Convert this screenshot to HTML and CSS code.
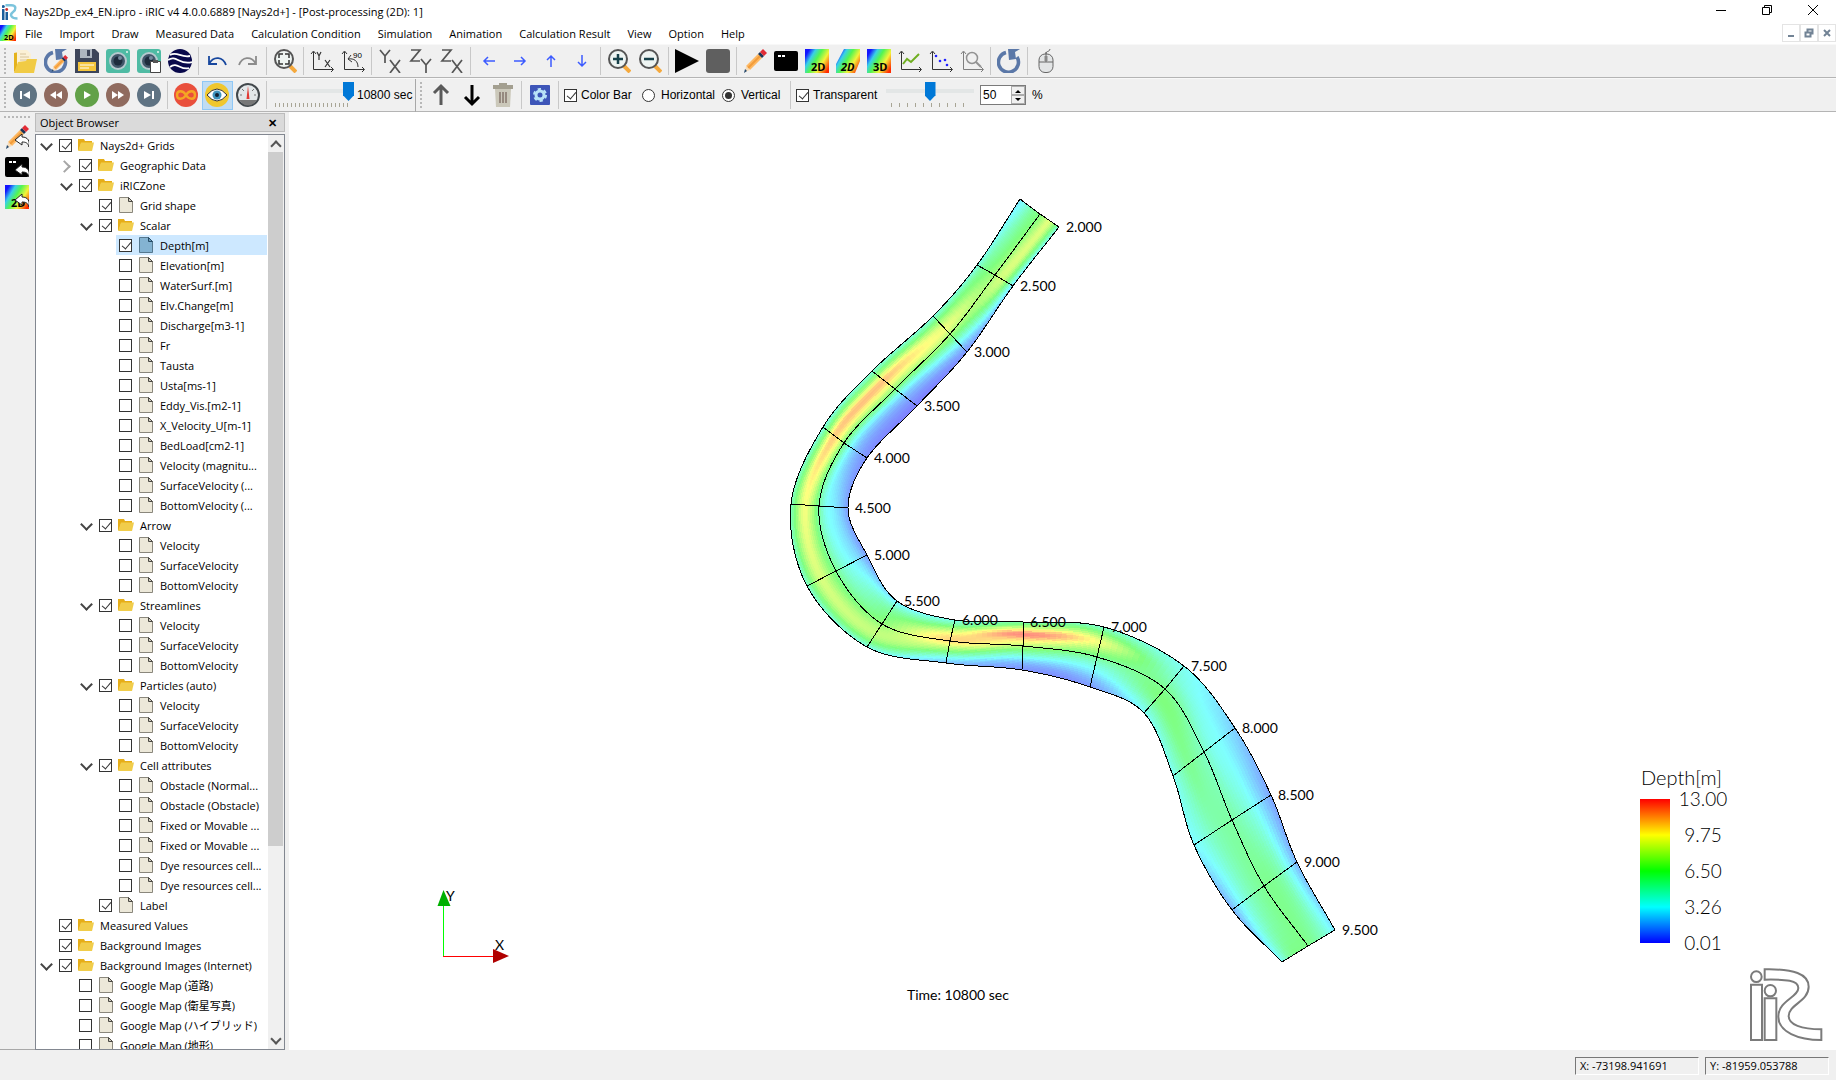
FILE: index.html
```
<!DOCTYPE html>
<html lang="en">
    <head>
        <meta charset="UTF-8">
        <title>Nays2Dp_ex4_EN.ipro - iRIC v4 4.0.0.6889 [Nays2d+] - [Post-processing (2D): 1]</title>
        <link rel="stylesheet" href="styles.css">
    </head>
    <body>
        <!-- icon definitions -->
        <svg class="defs" aria-hidden="true">
            <defs>
                <linearGradient id="rainbow" x1="0" y1="0.2" x2="1" y2="0.8">
                    <stop offset="0.05" stop-color="#1414ff"/>
                    <stop offset="0.25" stop-color="#39d0e8"/>
                    <stop offset="0.45" stop-color="#52f552"/>
                    <stop offset="0.7" stop-color="#f4f43a"/>
                    <stop offset="1" stop-color="#ff2a00"/>
                </linearGradient>
                <linearGradient id="depthBar" x1="0" y1="0" x2="0" y2="1">
                    <stop offset="0" stop-color="#f00"/>
                    <stop offset="0.25" stop-color="#ff0"/>
                    <stop offset="0.5" stop-color="#0f0"/>
                    <stop offset="0.75" stop-color="#0ff"/>
                    <stop offset="1" stop-color="#00f"/>
                </linearGradient>
            </defs>
            <symbol id="folder" viewBox="0 0 16 16">
                <path d="M0 2h6l1 2h7v3H3L1 13H0z" fill="#e6ae18"/>
                <path d="M3 5.500h13L14 14H0z" fill="#f1cd4b"/>
            </symbol>
            <symbol id="file" viewBox="0 0 16 16">
                <path d="M1.500 .500h9l4 4v11h-13z" fill="#ece8d9" stroke="#8a877c"/>
                <path d="M10.500 .500v4h4z" fill="#cfccbf" stroke="#4c4a44"/>
            </symbol>
            <symbol id="file-on" viewBox="0 0 16 16">
                <path d="M1.500 .500h9l4 4v11h-13z" fill="#84b3d2" stroke="#55788f"/>
                <path d="M10.500 .500v4h4z" fill="#6b9dbd" stroke="#274c66"/>
            </symbol>
            <symbol id="iric" viewBox="0 0 16 16">
                <path d="M0 5h2.500v11H0zM3.500 8H6v8H3.500z" fill="#1c5e9c"/>
                <circle cx="1.300" cy="2.500" r="1.500" fill="#1c5e9c"/><circle cx="4.700" cy="5.500" r="1.400" fill="#d03030"/>
                <path d="M3.500 1.300H9c6 0 5 4.500 2 6.700-4 3-1.500 6.500 4.500 6.500" fill="none" stroke="#7cc4dc" stroke-width="2.400"/>
            </symbol>
            <symbol id="open" viewBox="0 0 24 24">
                <path d="M1 4l5-1 1 15-6 5z" fill="#e5b31c"/>
                <path d="M4 1h10l4 4v14H4z" fill="#fbf0d5"/>
                <path d="M7 5h6M7 8h9M7 11h9" stroke="#d8c49c"/>
                <path d="M5 13l8-1 1-2h10l-3 14H1z" fill="#f1cb45"/>
            </symbol>
            <symbol id="pen" viewBox="0 0 24 24">
                <path d="M3 17L15 5l4 4L7 21z" fill="#fdb863"/><path d="M5 19L17 7" stroke="#f29c3a" stroke-width="2"/>
                <path d="M3 17l4 4-5 2z" fill="#f7dcb8"/><path d="M1 24l1-4 2 2z" fill="#24476b"/>
                <path d="M15 5l2-2 4 4-2 2z" fill="#1d3557"/><path d="M17 3l3-3 4 4-3 3z" fill="#e22b35"/>
            </symbol>
            <symbol id="reload" viewBox="0 0 24 24">
                <path d="M9 3.500A10 10 0 1 0 20 8" fill="none" stroke="#5b78a8" stroke-width="3.600"/>
                <path d="M11 0h12l-5 3 1 7-7 1z" fill="#5b78a8"/>
            </symbol>
            <symbol id="reloadpen" viewBox="0 0 24 24">
                <use href="#reload"/><use href="#pen" x="7" y="6" width="17" height="17"/>
            </symbol>
            <symbol id="save" viewBox="0 0 24 24">
                <path d="M0 0h20l4 4v20H0z" fill="#3d4559"/><path d="M5 0h12v9H5z" fill="#aeb6c0"/>
                <path d="M12 1h3v6h-3z" fill="#3d4559"/><path d="M3 13h18v9H3z" fill="#f5c63c"/>
                <path d="M5 16h14M5 19h9" stroke="#fff" stroke-width="1"/>
            </symbol>
            <symbol id="camera" viewBox="0 0 24 24">
                <rect width="24" height="24" rx="3" fill="#4fbba4"/><circle cx="12" cy="12" r="9" fill="#b6c9cf"/>
                <circle cx="12" cy="12" r="7" fill="#42566a"/><circle cx="12" cy="12" r="4.500" fill="#1d2b3d"/>
                <circle cx="14" cy="9" r="2" fill="#73879b"/><circle cx="21" cy="3" r="1" fill="#e9f5f2"/>
            </symbol>
            <symbol id="camcopy" viewBox="0 0 24 24">
                <use href="#camera"/><path d="M13.500 12.500h10v11h-10z" fill="#fff" stroke="#444"/><path d="M16 11h5v3h-5z" fill="#555"/>
            </symbol>
            <symbol id="earth" viewBox="0 0 24 24">
                <circle cx="12" cy="12" r="12" fill="#08084b"/>
                <path d="M2 6c7-4 11 3 20 1M0 11c8-6 12 6 24 2M2 18c7-6 11 4 19 1" fill="none" stroke="#fff" stroke-width="1.800"/>
            </symbol>
            <symbol id="undo" viewBox="0 0 24 24">
                <path d="M4 7v8h8M4 15C9 6 18 8 21 16" fill="none" stroke="#17479e" stroke-width="1.800"/>
            </symbol>
            <symbol id="redo" viewBox="0 0 24 24">
                <path d="M20 7v8h-8M20 15C15 6 6 8 3 16" fill="none" stroke="#8c8c8c" stroke-width="1.800"/>
            </symbol>
            <symbol id="glass" viewBox="0 0 24 24">
                <path d="M17 17l6 6" stroke="#f5a93d" stroke-width="4"/><circle cx="11" cy="10" r="9" fill="#eef4f2" stroke="#555" stroke-width="2"/>
            </symbol>
            <symbol id="fit" viewBox="0 0 24 24">
                <use href="#glass"/><path d="M6 9V5h4M12 5h4v4M16 11v4h-4M10 15H6v-4" fill="none" stroke="#333" stroke-width="1.500"/>
            </symbol>
            <symbol id="zoomin" viewBox="0 0 24 24">
                <use href="#glass"/><path d="M6 10h10M11 5v10" stroke="#17414a" stroke-width="2.500"/>
            </symbol>
            <symbol id="zoomout" viewBox="0 0 24 24">
                <use href="#glass"/><path d="M6 10h10" stroke="#17414a" stroke-width="2.500"/>
            </symbol>
            <symbol id="axis" viewBox="0 0 24 24">
                <path d="M3.500 3v17.500H23M1 5l2.500-3L6 5M21 18l2.500 2.500L21 23" fill="none" stroke="#333"/>
            </symbol>
            <symbol id="axisyx" viewBox="0 0 24 24">
                <use href="#axis"/><path d="M7 3l2 4 2-4M9 7v4M15 11l5 7M20 11l-5 7" fill="none" stroke="#333" stroke-width="1.200"/>
            </symbol>
            <symbol id="axis90" viewBox="0 0 24 24">
                <use href="#axis"/><path d="M17 18c0-6-4-9-10-8M10 6L7 10l4 3" fill="none" stroke="#333"/>
                <text x="12" y="9" font-size="8" font-family="Liberation Sans">90</text>
            </symbol>
            <symbol id="vyx" viewBox="0 0 24 24"><path d="M2 1l5 6 5-6M7 7v7M12 11l10 13M22 11L12 24" fill="none" stroke="#555" stroke-width="1.700"/></symbol>
            <symbol id="vzy" viewBox="0 0 24 24"><path d="M2 1h9L2 12h9M12 10l5 6 5-6M17 16v8" fill="none" stroke="#555" stroke-width="1.700"/></symbol>
            <symbol id="vzx" viewBox="0 0 24 24"><path d="M2 1h9L2 12h9M12 11l10 13M22 11L12 24" fill="none" stroke="#555" stroke-width="1.700"/></symbol>
            <symbol id="arrow" viewBox="0 0 24 24"><path d="M7 12h11M11 8l-4 4 4 4" fill="none" stroke="#3c5bff" stroke-width="1.500"/></symbol>
            <symbol id="play" viewBox="0 0 24 24"><path d="M0 0l24 12L0 24z"/></symbol>
            <symbol id="stop" viewBox="0 0 24 24"><rect width="24" height="24" rx="3" fill="#5f5f5f"/></symbol>
            <symbol id="console" viewBox="0 0 24 24"><rect y="2" width="24" height="20" rx="2"/><path d="M4 7h3M8 7h3" stroke="#fff" stroke-width="2"/></symbol>
            <symbol id="post2d" viewBox="0 0 24 24">
                <path d="M0 0h24v24H0z" fill="url(#rainbow)"/><text x="6" y="22" class="icontext">2D</text>
            </symbol>
            <symbol id="post2dbird" viewBox="0 0 24 24">
                <path d="M8 0h16v12l-5 12H0v-9z" fill="url(#rainbow)"/><text x="5" y="22" class="icontext slant">2D</text>
            </symbol>
            <symbol id="post3d" viewBox="0 0 24 24">
                <path d="M0 0h24v24H0z" fill="url(#rainbow)"/><text x="6" y="22" class="icontext">3D</text>
            </symbol>
            <symbol id="chart" viewBox="0 0 24 24"><use href="#axis"/><path d="M5 15l4-5 4 3 8-8" fill="none" stroke="#6fae20" stroke-width="2"/></symbol>
            <symbol id="scatter" viewBox="0 0 24 24"><use href="#axis"/><g fill="#22f"><circle cx="7" cy="7" r="1.300"/><circle cx="11" cy="12" r="1.300"/><circle cx="16" cy="11" r="1.300"/><circle cx="18" cy="16" r="1.300"/></g></symbol>
            <symbol id="chartzoom" viewBox="0 0 24 24"><g opacity="0.6"><use href="#axis"/><circle cx="12" cy="9" r="5.500" fill="none" stroke="#555" stroke-width="1.500"/><path d="M16 13l5 5" stroke="#555" stroke-width="2"/></g></symbol>
            <symbol id="mouse" viewBox="0 0 24 24">
                <rect x="5" y="5" width="14" height="18.500" rx="6" fill="#e3e5e6" stroke="#666"/><path d="M5 13h14M12 3v10M12 5c0-4 3-1 4-5" fill="none" stroke="#666"/><path d="M10.500 7h3v5h-3z" fill="#888"/>
            </symbol>
            <symbol id="first" viewBox="0 0 24 24"><circle cx="12" cy="12" r="12" fill="#5f7383"/><path d="M7 8h2v8H7zM17 8v8l-7-4z" fill="#fff"/></symbol>
            <symbol id="back" viewBox="0 0 24 24"><circle cx="12" cy="12" r="12" fill="#906b5f"/><path d="M12 8v8l-6-4zM18 8v8l-6-4z" fill="#fff"/></symbol>
            <symbol id="run" viewBox="0 0 24 24"><circle cx="12" cy="12" r="12" fill="#62a148"/><path d="M9 8l7 4-7 4z" fill="#fff"/></symbol>
            <symbol id="loop" viewBox="0 0 24 24"><circle cx="12" cy="12" r="12" fill="#e94f3c"/><path d="M12 12C9 7 3 7 3 12s6 5 9 0 9-5 9 0-6 5-9 0z" fill="none" stroke="#f5a623" stroke-width="2.400"/></symbol>
            <symbol id="eye" viewBox="0 0 24 24"><circle cx="12" cy="12" r="12" fill="#f0c72e"/><path d="M2 12q10-12 20 0-10 12-20 0z" fill="#fff" stroke="#333"/><circle cx="12" cy="12" r="4.500" fill="#3f93bd"/><circle cx="12" cy="12" r="2" fill="#123"/></symbol>
            <symbol id="gauge" viewBox="0 0 24 24"><circle cx="12" cy="12" r="11" fill="#e3e8ea" stroke="#42484c" stroke-width="2"/><path d="M3 17h18q-9 11-18 0z" fill="#777"/><path d="M4 12h2M18 12h2M6 6l2 2M18 6l-2 2" stroke="#777"/><path d="M12 3l1.500 13h-3z" fill="#e23b35"/></symbol>
            <symbol id="up" viewBox="0 0 24 24"><path d="M12 22V4M5 10l7-7 7 7" fill="none" stroke="currentColor" stroke-width="3"/></symbol>
            <symbol id="trash" viewBox="0 0 24 24"><path d="M4 6h16l-1 18H5z" fill="#cbc8ba"/><path d="M2 2h20v4H2zM8 0h8v3H8z" fill="#a39f90"/><path d="M9 9v11M12 9v11M15 9v11" stroke="#96897f" stroke-width="2"/></symbol>
            <symbol id="gear" viewBox="0 0 24 24">
                <rect x="2" y="2" width="20" height="20" rx="1" fill="#3d55b8"/><circle cx="12" cy="12" r="4" fill="none" stroke="#b9e3f8" stroke-width="3"/>
                <circle cx="12" cy="12" r="6" fill="none" stroke="#b9e3f8" stroke-width="2" stroke-dasharray="3.300 3"/>
            </symbol>
            <symbol id="reply" viewBox="0 0 24 24"><path d="M10 15l7-6v3c6 0 8 4 7 10-1-4-3-5-7-5v3z" stroke="#222"/></symbol>
        </svg>

        <header class="titlebar">
            <svg class="ico16"><use href="#iric"/></svg>
            <span class="title">Nays2Dp_ex4_EN.ipro - iRIC v4 4.0.0.6889 [Nays2d+] - [Post-processing (2D): 1]</span>
            <div class="winbtns">
                <button aria-label="Minimize"><svg viewBox="0 0 10 10"><path d="M0 5.500h10"/></svg></button>
                <button aria-label="Restore"><svg viewBox="0 0 10 10"><path d="M.500 2.500h7v7h-7zM2.500 2.500v-2h7v7h-2"/></svg></button>
                <button aria-label="Close"><svg viewBox="0 0 10 10"><path d="M0 0l10 10M10 0L0 10"/></svg></button>
            </div>
        </header>

        <nav class="menubar">
            <svg class="ico16"><use href="#post2d"/></svg>
            <a href="#">File</a>
            <a href="#">Import</a>
            <a href="#">Draw</a>
            <a href="#">Measured Data</a>
            <a href="#">Calculation Condition</a>
            <a href="#">Simulation</a>
            <a href="#">Animation</a>
            <a href="#">Calculation Result</a>
            <a href="#">View</a>
            <a href="#">Option</a>
            <a href="#">Help</a>
            <div class="mdibtns">
                <button aria-label="Minimize window"><svg viewBox="0 0 10 10"><path d="M2 8h6"/></svg></button>
                <button aria-label="Restore window"><svg viewBox="0 0 10 10"><path d="M1.500 4.500h5v4h-5zM3.500 4V1.500h5v4H7"/></svg></button>
                <button aria-label="Close window"><svg viewBox="0 0 10 10"><path d="M2 2l6 6M8 2L2 8"/></svg></button>
            </div>
        </nav>

        <div class="toolbar">
            <span class="grip"></span>
            <button aria-label="Open"><svg><use href="#open"/></svg></button>
            <button aria-label="Reload project"><svg><use href="#reloadpen"/></svg></button>
            <button aria-label="Save"><svg><use href="#save"/></svg></button>
            <button aria-label="Snapshot"><svg><use href="#camera"/></svg></button>
            <button aria-label="Copy snapshot"><svg><use href="#camcopy"/></svg></button>
            <button aria-label="Google Earth"><svg><use href="#earth"/></svg></button>
            <span class="sep"></span>
            <button aria-label="Undo"><svg><use href="#undo"/></svg></button>
            <button aria-label="Redo"><svg><use href="#redo"/></svg></button>
            <span class="sep"></span>
            <button aria-label="Fit"><svg><use href="#fit"/></svg></button>
            <span class="sep"></span>
            <button aria-label="Reset rotation"><svg><use href="#axisyx"/></svg></button>
            <button aria-label="Rotate 90"><svg><use href="#axis90"/></svg></button>
            <span class="sep"></span>
            <button aria-label="XY plane"><svg><use href="#vyx"/></svg></button>
            <button aria-label="YZ plane"><svg><use href="#vzy"/></svg></button>
            <button aria-label="XZ plane"><svg><use href="#vzx"/></svg></button>
            <span class="sep"></span>
            <button aria-label="Move left"><svg><use href="#arrow"/></svg></button>
            <button aria-label="Move right"><svg class="r180"><use href="#arrow"/></svg></button>
            <button aria-label="Move up"><svg class="r90"><use href="#arrow"/></svg></button>
            <button aria-label="Move down"><svg class="r270"><use href="#arrow"/></svg></button>
            <span class="sep"></span>
            <button aria-label="Zoom in"><svg><use href="#zoomin"/></svg></button>
            <button aria-label="Zoom out"><svg><use href="#zoomout"/></svg></button>
            <span class="sep"></span>
            <button aria-label="Run"><svg><use href="#play"/></svg></button>
            <button aria-label="Stop"><svg><use href="#stop"/></svg></button>
            <span class="sep"></span>
            <button aria-label="Pre-processor"><svg><use href="#pen"/></svg></button>
            <button aria-label="Solver console"><svg><use href="#console"/></svg></button>
            <button aria-label="2D post"><svg><use href="#post2d"/></svg></button>
            <button aria-label="2D bird eye post"><svg><use href="#post2dbird"/></svg></button>
            <button aria-label="3D post"><svg><use href="#post3d"/></svg></button>
            <button aria-label="Chart"><svg><use href="#chart"/></svg></button>
            <button aria-label="Scatter chart"><svg><use href="#scatter"/></svg></button>
            <button aria-label="Verification"><svg><use href="#chartzoom"/></svg></button>
            <span class="sep"></span>
            <button aria-label="Reload result"><svg><use href="#reload"/></svg></button>
            <span class="sep"></span>
            <button aria-label="Mouse hint"><svg><use href="#mouse"/></svg></button>
        </div>

        <div class="toolbar">
            <span class="grip"></span>
            <button aria-label="First"><svg><use href="#first"/></svg></button>
            <button aria-label="Back"><svg><use href="#back"/></svg></button>
            <button aria-label="Play"><svg><use href="#run"/></svg></button>
            <button aria-label="Forward"><svg class="r180"><use href="#back"/></svg></button>
            <button aria-label="Last"><svg class="r180"><use href="#first"/></svg></button>
            <span class="sep"></span>
            <button aria-label="Loop"><svg><use href="#loop"/></svg></button>
            <button class="active" aria-label="Follow"><svg><use href="#eye"/></svg></button>
            <button aria-label="Speed"><svg><use href="#gauge"/></svg></button>
            <span class="sep"></span>
            <span class="slider time"><input type="range" aria-label="Time step" min="0" max="20" value="20"></span>
            <span class="tbtext seconds">10800 sec</span>
            <span class="grip"></span>
            <button class="gray" aria-label="Move up"><svg><use href="#up"/></svg></button>
            <button aria-label="Move down"><svg class="r180"><use href="#up"/></svg></button>
            <button aria-label="Delete"><svg><use href="#trash"/></svg></button>
            <span class="sep"></span>
            <button aria-label="Property"><svg><use href="#gear"/></svg></button>
            <span class="sep"></span>
            <label class="tbtext w80"><input type="checkbox" checked>Color Bar</label>
            <label class="tbtext w80"><input type="radio" name="dir">Horizontal</label>
            <label class="tbtext w66"><input type="radio" name="dir" checked>Vertical</label>
            <span class="sep"></span>
            <label class="tbtext w92"><input type="checkbox" checked>Transparent</label>
            <span class="slider alpha"><input type="range" aria-label="Opacity" min="0" max="100" value="50"></span>
            <span class="spin">
                <input type="text" aria-label="Opacity value" value="50">
                <span class="steps">
                    <button aria-label="Increase"><svg viewBox="0 0 8 4"><path d="M1 4l3-3 3 3z"/></svg></button>
                    <button aria-label="Decrease"><svg viewBox="0 0 8 4"><path d="M1 0l3 3 3-3z"/></svg></button>
                </span>
            </span>
            <span class="tbtext">%</span>
        </div>

        <main>
            <aside class="sidebar">
                <span class="hgrip"></span>
                <button aria-label="Focus pre-processor"><svg><use href="#pen"/><use href="#reply" class="light"/></svg></button>
                <button aria-label="Focus console"><svg><use href="#console"/><use href="#reply" class="light"/></svg></button>
                <button aria-label="Focus 2D post"><svg><use href="#post2d"/><use href="#reply" class="light"/></svg></button>
            </aside>

            <section class="browser">
                <h2>Object Browser <button aria-label="Close">✕</button></h2>
                <div class="treebox">
                    <ul class="tree">
                        <li class="open"><label><input type="checkbox" checked><svg><use href="#folder"/></svg>Nays2d+ Grids</label></li>
                        <li class="lv1 closed"><label><input type="checkbox" checked><svg><use href="#folder"/></svg>Geographic Data</label></li>
                        <li class="lv1 open"><label><input type="checkbox" checked><svg><use href="#folder"/></svg>iRICZone</label></li>
                        <li class="lv2"><label><input type="checkbox" checked><svg><use href="#file"/></svg>Grid shape</label></li>
                        <li class="lv2 open"><label><input type="checkbox" checked><svg><use href="#folder"/></svg>Scalar</label></li>
                        <li class="lv3 selected"><label><input type="checkbox" checked><svg><use href="#file-on"/></svg>Depth[m]</label></li>
                        <li class="lv3"><label><input type="checkbox"><svg><use href="#file"/></svg>Elevation[m]</label></li>
                        <li class="lv3"><label><input type="checkbox"><svg><use href="#file"/></svg>WaterSurf.[m]</label></li>
                        <li class="lv3"><label><input type="checkbox"><svg><use href="#file"/></svg>Elv.Change[m]</label></li>
                        <li class="lv3"><label><input type="checkbox"><svg><use href="#file"/></svg>Discharge[m3-1]</label></li>
                        <li class="lv3"><label><input type="checkbox"><svg><use href="#file"/></svg>Fr</label></li>
                        <li class="lv3"><label><input type="checkbox"><svg><use href="#file"/></svg>Tausta</label></li>
                        <li class="lv3"><label><input type="checkbox"><svg><use href="#file"/></svg>Usta[ms-1]</label></li>
                        <li class="lv3"><label><input type="checkbox"><svg><use href="#file"/></svg>Eddy_Vis.[m2-1]</label></li>
                        <li class="lv3"><label><input type="checkbox"><svg><use href="#file"/></svg>X_Velocity_U[m-1]</label></li>
                        <li class="lv3"><label><input type="checkbox"><svg><use href="#file"/></svg>BedLoad[cm2-1]</label></li>
                        <li class="lv3"><label><input type="checkbox"><svg><use href="#file"/></svg>Velocity (magnitu...</label></li>
                        <li class="lv3"><label><input type="checkbox"><svg><use href="#file"/></svg>SurfaceVelocity (...</label></li>
                        <li class="lv3"><label><input type="checkbox"><svg><use href="#file"/></svg>BottomVelocity (...</label></li>
                        <li class="lv2 open"><label><input type="checkbox" checked><svg><use href="#folder"/></svg>Arrow</label></li>
                        <li class="lv3"><label><input type="checkbox"><svg><use href="#file"/></svg>Velocity</label></li>
                        <li class="lv3"><label><input type="checkbox"><svg><use href="#file"/></svg>SurfaceVelocity</label></li>
                        <li class="lv3"><label><input type="checkbox"><svg><use href="#file"/></svg>BottomVelocity</label></li>
                        <li class="lv2 open"><label><input type="checkbox" checked><svg><use href="#folder"/></svg>Streamlines</label></li>
                        <li class="lv3"><label><input type="checkbox"><svg><use href="#file"/></svg>Velocity</label></li>
                        <li class="lv3"><label><input type="checkbox"><svg><use href="#file"/></svg>SurfaceVelocity</label></li>
                        <li class="lv3"><label><input type="checkbox"><svg><use href="#file"/></svg>BottomVelocity</label></li>
                        <li class="lv2 open"><label><input type="checkbox" checked><svg><use href="#folder"/></svg>Particles (auto)</label></li>
                        <li class="lv3"><label><input type="checkbox"><svg><use href="#file"/></svg>Velocity</label></li>
                        <li class="lv3"><label><input type="checkbox"><svg><use href="#file"/></svg>SurfaceVelocity</label></li>
                        <li class="lv3"><label><input type="checkbox"><svg><use href="#file"/></svg>BottomVelocity</label></li>
                        <li class="lv2 open"><label><input type="checkbox" checked><svg><use href="#folder"/></svg>Cell attributes</label></li>
                        <li class="lv3"><label><input type="checkbox"><svg><use href="#file"/></svg>Obstacle (Normal...</label></li>
                        <li class="lv3"><label><input type="checkbox"><svg><use href="#file"/></svg>Obstacle (Obstacle)</label></li>
                        <li class="lv3"><label><input type="checkbox"><svg><use href="#file"/></svg>Fixed or Movable ...</label></li>
                        <li class="lv3"><label><input type="checkbox"><svg><use href="#file"/></svg>Fixed or Movable ...</label></li>
                        <li class="lv3"><label><input type="checkbox"><svg><use href="#file"/></svg>Dye resources cell...</label></li>
                        <li class="lv3"><label><input type="checkbox"><svg><use href="#file"/></svg>Dye resources cell...</label></li>
                        <li class="lv2"><label><input type="checkbox" checked><svg><use href="#file"/></svg>Label</label></li>
                        <li><label><input type="checkbox" checked><svg><use href="#folder"/></svg>Measured Values</label></li>
                        <li><label><input type="checkbox" checked><svg><use href="#folder"/></svg>Background Images</label></li>
                        <li class="open"><label><input type="checkbox" checked><svg><use href="#folder"/></svg>Background Images (Internet)</label></li>
                        <li class="lv1"><label><input type="checkbox"><svg><use href="#file"/></svg>Google Map (道路)</label></li>
                        <li class="lv1"><label><input type="checkbox"><svg><use href="#file"/></svg>Google Map (衛星写真)</label></li>
                        <li class="lv1"><label><input type="checkbox"><svg><use href="#file"/></svg>Google Map (ハイブリッド)</label></li>
                        <li class="lv1"><label><input type="checkbox"><svg><use href="#file"/></svg>Google Map (地形)</label></li>
                    </ul>
                    <div class="scroll">
                        <button class="sup" aria-label="Scroll up"></button>
                        <div class="thumb"></div>
                        <div class="rest"></div>
                        <button class="sdown" aria-label="Scroll down"></button>
                    </div>
                </div>
            </section>

            <svg class="view" viewBox="289 112 1547 938" preserveAspectRatio="xMidYMid meet">
                <g id="mesh" shape-rendering="crispEdges"></g>
                <g id="lines" fill="none" stroke="#000" shape-rendering="crispEdges"></g>
                <g id="stations" class="vtk"></g>

                <!-- axes -->
                <path d="M443.500 957V906" stroke="#0f0"/>
                <path d="M443 956.500h50" stroke="#f00"/>
                <path d="M443.500 890l7 16h-13z" fill="#00b000"/>
                <path d="M509 956l-16-7v14z" fill="#b00000"/>
                <text x="446" y="901" class="vtk">Y</text>
                <text x="495" y="950" class="vtk">X</text>
                <text x="907" y="1000" class="vtk">Time: 10800 sec</text>

                <!-- color bar -->
                <text x="1641" y="785" class="vtk barname">Depth[m]</text>
                <rect x="1640" y="799" width="30" height="144" fill="url(#depthBar)"/>
                <g class="vtk barvalue">
                    <text x="1703" y="806">13.00</text>
                    <text x="1703" y="842">9.75</text>
                    <text x="1703" y="878">6.50</text>
                    <text x="1703" y="914">3.26</text>
                    <text x="1703" y="950">0.01</text>
                </g>

                <!-- iRIC logo -->
                <svg x="1560" y="740" width="276" height="340" viewBox="0 0 828 1020">
                    <g fill="#fff" stroke="#7b7b7b" stroke-width="6">
                        <path d="M573 734h33v166h-33zM614 775h35v125h-35z"/>
                        <circle cx="589" cy="710" r="16"/>
                        <circle cx="631" cy="752" r="17"/>
                        <path d="M614 688v31c65-1 101 1 101 25 0 28-60 38-60 86 0 46 60 70 129 70v-32c-60 0-98-14-98-40 0-34 60-44 60-88 0-38-45-54-132-52z"/>
                    </g>
                </svg>
            </svg>
        </main>

        <footer class="statusbar">
            <span>X: -73198.941691</span>
            <span>Y: -81959.053788</span>
        </footer>

        <script src="script.js"></script>
    </body>
</html>
```
FILE: styles.css
```
* {
    box-sizing: border-box;
}
body {
    margin: 0;
    height: 100vh;
    display: flex;
    flex-direction: column;
    overflow: hidden;
    background: #f0f0f0;
    color: #000;
    font-family: "Open Sans", "Noto Sans CJK JP", sans-serif;
    font-size: 11px;
}
button {
    padding: 0;
    border: none;
    background: none;
    font: inherit;
}
.defs {
    position: absolute;
    width: 0;
    height: 0;
}
.icontext {
    font: bold 11px "Open Sans", sans-serif;
}
.slant {
    font-style: italic;
}
.ico16 {
    width: 16px;
    height: 16px;
}

/* title and menu */
.titlebar {
    display: flex;
    align-items: center;
    height: 23px;
    padding-left: 2px;
    background: #fff;
}
.title {
    margin-left: 6px;
}
.winbtns {
    display: flex;
    align-self: flex-start;
    margin-left: auto;
    height: 20px;
}
.winbtns button {
    width: 46px;
}
.winbtns svg, .mdibtns svg {
    width: 10px;
    height: 10px;
    fill: none;
    stroke: #000;
}
.menubar {
    display: flex;
    align-items: center;
    height: 21px;
    padding-bottom: 1px;
    background: #fff;
}
.menubar a {
    padding: 0 8px 0 9px;
    color: #000;
    text-decoration: none;
}
.mdibtns {
    display: flex;
    margin-left: auto;
}
.mdibtns button {
    width: 18px;
    height: 18px;
    border: 1px solid #e4e4e4;
}
.mdibtns svg {
    stroke: #728395;
    stroke-width: 2;
}

/* toolbars */
.toolbar {
    display: flex;
    align-items: center;
    height: 34px;
    border-top: 1px solid #f8f8f8;
    border-bottom: 1px solid #b4b4b4;
    white-space: nowrap;
}
.toolbar svg {
    display: block;
    width: 24px;
    height: 24px;
}
.toolbar > button {
    width: 31px;
    height: 29px;
    padding-left: 3px;
    flex: none;
}
.toolbar > .active {
    background: #c0dcf3;
    outline: 1px solid #90c8f6;
    outline-offset: -1px;
}
.gray {
    color: #5a5a5a;
}
.r90 { transform: rotate(90deg); }
.r180 { transform: rotate(180deg); }
.r270 { transform: rotate(270deg); }
.grip {
    width: 2px;
    height: 26px;
    margin: 0 4px;
    background: repeating-linear-gradient(#b8b8b8 0 2px, transparent 2px 4px);
}
.sep {
    width: 6px;
    height: 28px;
    background: linear-gradient(#c8c8c8, #c8c8c8) 2px 0 / 1px 100% no-repeat;
}
.tbtext {
    display: flex;
    align-items: center;
    gap: 4px;
    font-family: "Liberation Sans", sans-serif;
    font-size: 12px;
}
.w80 { width: 80px; }
.w66 { width: 66px; }
.w92 { width: 92px; }
.toolbar .sep + .tbtext {
    padding-left: 2px;
}
.seconds {
    width: 59px;
    height: 33px;
    border-right: 1px solid #a8a8a8;
}
.slider {
    position: relative;
    height: 26px;
    padding-bottom: 1px;
}
.time {
    width: 84px;
    margin-right: 3px;
}
.alpha {
    width: 88px;
    margin-right: 6px;
}
.slider input {
    display: block;
    width: 100%;
    height: 19px;
    margin: 0;
    appearance: none;
    background: linear-gradient(#e3e6e6, #e3e6e6) 0 7px / 100% 4px no-repeat;
}
.slider input::-webkit-slider-thumb {
    appearance: none;
    width: 11px;
    height: 19px;
    background: #0078d7;
    clip-path: polygon(0 0, 100% 0, 100% 70%, 50% 100%, 0 70%);
}
.slider::after {
    content: "";
    display: block;
    height: 4px;
    margin: 2px 4px 0 5px;
    background: repeating-linear-gradient(90deg, #a8a595 0 1px, transparent 1px 4px);
}
.alpha::after {
    background: repeating-linear-gradient(90deg, #a8a595 0 1px, transparent 1px 8px);
}
.spin {
    display: flex;
    width: 46px;
    height: 20px;
    margin-right: 6px;
    border: 1px solid #7a7a7a;
    background: #fff;
}
.spin input {
    flex: 1;
    min-width: 0;
    padding: 0 2px;
    border: none;
    outline: none;
    font: 12px "Liberation Sans", sans-serif;
}
.steps {
    display: flex;
    flex-direction: column;
    width: 14px;
}
.steps button {
    flex: 1;
    display: flex;
    align-items: center;
    justify-content: center;
    border: 1px solid #adadad;
    background: #f0f0f0;
}
.toolbar .steps svg {
    width: 8px;
    height: 4px;
}

/* check boxes and radios */
input[type=checkbox], input[type=radio] {
    appearance: none;
    position: relative;
    flex: none;
    width: 13px;
    height: 13px;
    margin: 0;
    border: 1px solid #333;
    background: #fff;
}
input[type=radio] {
    border-radius: 50%;
    margin-right: 2px;
}
input[type=checkbox]:checked::after {
    content: "";
    position: absolute;
    left: 4px;
    top: 0;
    width: 4px;
    height: 8px;
    border: solid #333;
    border-width: 0 1px 1px 0;
    transform: rotate(40deg);
}
input[type=radio]:checked::after {
    content: "";
    position: absolute;
    inset: 2px;
    border-radius: 50%;
    background: #333;
}

main {
    flex: 1;
    display: flex;
    min-height: 0;
}
.sidebar {
    display: flex;
    flex-direction: column;
    align-items: center;
    width: 35px;
    padding-right: 1px;
    border-bottom: 1px solid #a8a8a8;
}
.hgrip {
    width: 26px;
    height: 2px;
    margin: 4px 0 4px;
    background: repeating-linear-gradient(90deg, #b8b8b8 0 2px, transparent 2px 4px);
}
.sidebar button {
    height: 30px;
}
.sidebar svg {
    display: block;
    width: 24px;
    height: 24px;
}
.light {
    fill: #fff;
}

/* object browser */
.browser {
    display: flex;
    flex-direction: column;
    width: 250px;
    margin-right: 4px;
}
.browser h2 {
    display: flex;
    justify-content: space-between;
    align-items: center;
    height: 19px;
    margin: 1px 0 2px;
    padding: 0 7px 0 4px;
    border: 1px solid #bcbcbc;
    background: #dadada;
    font-size: 11px;
    font-weight: normal;
}
.browser h2 button {
    font-weight: bold;
}
.treebox {
    flex: 1;
    min-height: 0;
    display: flex;
    border: 1px solid #828790;
    background: #fff;
}
.tree {
    flex: 1;
    min-width: 0;
    margin: 0;
    padding: 0 1px 0 0;
    overflow: hidden;
    list-style: none;
}
.tree li {
    position: relative;
    height: 20px;
    margin-left: 20px;
    white-space: nowrap;
}
.tree label {
    display: flex;
    align-items: center;
    height: 20px;
    padding-left: 3px;
}
.tree svg {
    flex: none;
    width: 16px;
    height: 16px;
    margin: 0 6px;
}
.tree .lv1 { margin-left: 40px; }
.tree .lv2 { margin-left: 60px; }
.tree .lv3 { margin-left: 80px; }
.selected label {
    background: #cde8ff;
}
.open::before, .closed::before {
    content: "";
    position: absolute;
    left: -14px;
    top: 5px;
    width: 7px;
    height: 7px;
    border: solid #444;
    border-width: 0 2px 2px 0;
    transform: rotate(45deg);
}
.closed::before {
    left: -16px;
    top: 7px;
    border-color: #a6a6a6;
    transform: rotate(-45deg);
}
.scroll {
    display: flex;
    flex-direction: column;
    width: 16px;
    padding-right: 1px;
    background: #f0f0f0;
}
.thumb {
    flex: 694;
    background: #cdcdcd;
}
.rest {
    flex: 186;
}
.scroll button {
    height: 17px;
    display: flex;
    align-items: center;
    justify-content: center;
}
.scroll button::after {
    content: "";
    width: 6px;
    height: 6px;
    border: solid #555;
    border-width: 2px 0 0 2px;
    transform: translateY(2px) rotate(45deg);
}
.scroll .sdown::after {
    transform: translateY(-2px) rotate(225deg);
}

/* post view */
.view {
    flex: 1;
    min-width: 0;
    height: 100%;
    background: #fff;
}
.vtk {
    font-family: Lato, sans-serif;
    font-size: 14px;
}
.barname {
    font-size: 20px;
    font-weight: 300;
}
.barvalue {
    font-size: 19px;
    font-weight: 300;
    text-anchor: middle;
}

.statusbar {
    display: flex;
    justify-content: flex-end;
    gap: 6px;
    height: 30px;
    padding: 7px 7px 0 0;
}
.statusbar span {
    width: 124px;
    height: 18px;
    padding-left: 4px;
    line-height: 16px;
    border: 1px solid;
    border-color: #777 #fff #fff #777;
}
```
FILE: script.js
```
// cross sections: label, left bank, center, right bank, relative depth from left to right
var sections = [
    ["2.000", [1020, 199], [1040, 214], [1059, 227], [.2, .28, .38, .46, .5, .6, .7, .55, .3]],
    ["2.500", [977, 265], [995, 275], [1013, 286], [.28, .42, .48, .53, .58, .66, .62, .42, .17]],
    ["3.000", [933, 316], [950, 334], [967, 352], [.3, .5, .66, .72, .6, .44, .26, .12, .04]],
    ["3.500", [872, 371], [895, 389], [917, 406], [.3, .58, .86, .74, .52, .25, .11, .04, 0]],
    ["4.000", [823, 427], [844, 443], [867, 458], [.28, .55, .84, .76, .5, .27, .14, .07, .03]],
    ["4.500", [791, 504], [819, 506], [848, 508], [.35, .58, .74, .62, .42, .27, .22, .15, .06]],
    ["5.000", [807, 586], [836, 571], [867, 555], [.32, .56, .68, .58, .45, .33, .25, .18, .06]],
    ["5.500", [867, 647], [882, 624], [897, 601], [.28, .5, .62, .62, .55, .5, .46, .36, .2]],
    ["6.000", [946, 663], [950, 641], [955, 620], [.12, .27, .48, .66, .82, .8, .65, .45, .28]],
    ["6.500", [1022, 670], [1023, 646], [1023, 622], [.04, .1, .24, .43, .62, .8, .98, .66, .4]],
    ["7.000", [1090, 687], [1097, 657], [1104, 627], [.05, .12, .22, .32, .45, .6, .72, .55, .33]],
    ["7.500", [1144, 713], [1165, 689], [1184, 666], [.25, .36, .46, .5, .46, .4, .34, .3, .27]],
    ["8.000", [1173, 776], [1204, 752], [1235, 728], [.27, .38, .46, .42, .36, .28, .25, .2, .15]],
    ["8.500", [1194, 845], [1232, 820], [1271, 795], [.23, .3, .38, .42, .42, .36, .28, .17, .07]],
    ["9.000", [1232, 910], [1264, 886], [1297, 862], [.1, .24, .35, .42, .46, .46, .4, .25, .1]],
    ["9.500", [1282, 962], [1308, 946], [1335, 930], [.25, .42, .48, .48, .48, .44, .38, .3, .2]]
];
var STEPS = 14;
var LANES = 32;
var ns = "http://www.w3.org/2000/svg";

function spline(list, t) {
    var n = list.length - 1;
    var i = Math.min(Math.floor(t), n - 1);
    var u = t - i;
    var b = list[i], c = list[i + 1];
    var a = i > 0 ? list[i - 1] : 2 * b - c;
    var d = i + 2 <= n ? list[i + 2] : 2 * c - b;
    return b + 0.5 * u * (c - a + u * (2 * a - 5 * b + 4 * c - d + u * (3 * (b - c) + d - a)));
}

// bank: 1 = left, 2 = center, 3 = right
function bankPoint(bank, t) {
    return [
        spline(sections.map(function(s) { return s[bank][0]; }), t),
        spline(sections.map(function(s) { return s[bank][1]; }), t)
    ];
}

// blue - cyan - green - yellow - red, half transparent on white
function depthColor(v) {
    v = Math.max(0, Math.min(1, v)) * 4;
    var r = Math.max(0, Math.min(1, v - 2));
    var g = Math.min(1, v, 4 - v);
    var b = Math.max(0, Math.min(1, 2 - v));
    return "rgb(" + [r, g, b].map(function(c) { return Math.round(127 + 128 * c); }).join(",") + ")";
}

function add(parent, name, attrs) {
    var el = document.createElementNS(ns, name);
    for (var key in attrs) el.setAttribute(key, attrs[key]);
    document.getElementById(parent).appendChild(el);
    return el;
}

function drawMesh() {
    var rows = [];
    var total = (sections.length - 1) * STEPS;
    for (var k = 0; k <= total; k++) {
        var t = k / STEPS;
        var l = bankPoint(1, t), c = bankPoint(2, t), r = bankPoint(3, t);
        var depths = [];
        for (var m = 0; m < 9; m++) {
            depths.push(spline(sections.map(function(s) { return s[4][m]; }), t));
        }
        var row = [];
        for (var j = 0; j <= LANES; j++) {
            var s = j / LANES * 2;
            var p = s < 1 ? l : c, q = s < 1 ? c : r, f = s < 1 ? s : s - 1;
            row.push({
                x: p[0] + (q[0] - p[0]) * f,
                y: p[1] + (q[1] - p[1]) * f,
                v: spline(depths, j / LANES * 8)
            });
        }
        rows.push(row);
    }
    for (var k = 0; k < total; k++) {
        for (var j = 0; j < LANES; j++) {
            var quad = [rows[k][j], rows[k][j + 1], rows[k + 1][j + 1], rows[k + 1][j]];
            var v = (quad[0].v + quad[1].v + quad[2].v + quad[3].v) / 4;
            add("mesh", "polygon", {
                points: quad.map(function(p) { return p.x.toFixed(1) + "," + p.y.toFixed(1); }).join(" "),
                fill: depthColor(v)
            });
        }
    }
}

function drawLines() {
    for (var bank = 1; bank <= 3; bank++) {
        var pts = [];
        for (var k = 0; k <= (sections.length - 1) * STEPS; k++) {
            pts.push(bankPoint(bank, k / STEPS).join(","));
        }
        add("lines", "polyline", { points: pts.join(" ") });
    }
    sections.forEach(function(s) {
        add("lines", "polyline", { points: s[1] + " " + s[2] + " " + s[3] });
        add("stations", "text", { x: s[3][0] + 7, y: s[3][1] + 5 }).textContent = s[0];
    });
}

drawMesh();
drawLines();
```
